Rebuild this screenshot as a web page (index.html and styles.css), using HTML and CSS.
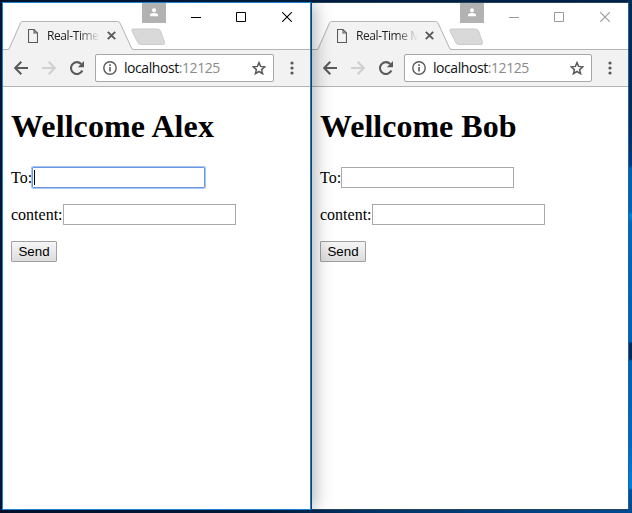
FILE: index.html
```
<!DOCTYPE html>
<html lang="en">
<head>
<meta charset="utf-8">
<title>Real-Time Messages</title>
<link rel="stylesheet" href="styles.css">
</head>
<body>
<svg width="0" height="0" class="defs">
  <symbol id="file" viewBox="0 0 10 14"><path d="M.5.5H6L9.500 4v9.500H.5zM6 .5V4h3.500" fill="none" stroke="#5a5a5a" stroke-width="1.100"/></symbol>
  <symbol id="tabclose" viewBox="0 0 9 9"><path d="M.8.8l7.400 7.400M8.200.8L.8 8.200" stroke="#5a5a5a" stroke-width="1.900"/></symbol>
  <symbol id="newtab" viewBox="0 0 36 18"><path d="M3 1h24.500q2 0 3 2l4 11q.7 2.500-1.500 2.500H11q-2.500 0-3.500-2.500L2 3Q1.400 1 3 1z" fill="#d9d9d9" stroke="#cbcbcb"/></symbol>
  <symbol id="user" viewBox="0 0 10 9"><circle cx="5" cy="2.200" r="2" fill="#fff"/><path d="M1 8.200V7q0-2 4-2t4 2v1.200z" fill="#fff"/></symbol>
  <symbol id="back" viewBox="0 0 14 14"><path d="M14 7H1.500M7.300.8L1.200 7l6.100 6.200" fill="none" stroke="currentColor" stroke-width="2"/></symbol>
  <symbol id="reload" viewBox="0 0 14 14"><path d="M12.300 9.500A5.900 5.900 0 1 1 11.200 3" fill="none" stroke="#5a5a5a" stroke-width="2.100"/><path d="M14 0v6.200H7.800z" fill="#5a5a5a"/></symbol>
  <symbol id="info" viewBox="0 0 14 14"><circle cx="7" cy="7" r="6.200" fill="none" stroke="#5a5a5a" stroke-width="1.400"/><path d="M7 6v4.500M7 3.300v1.600" stroke="#5a5a5a" stroke-width="1.600"/></symbol>
  <symbol id="star" viewBox="0 0 14 14"><path d="M7 1.600l1.600 3.800 4.200.4-3.200 2.800 1 4.100L7 10.500l-3.600 2.200 1-4.100-3.200-2.800 4.200-.4z" fill="none" stroke="#5a5a5a" stroke-width="1.500"/></symbol>
  <symbol id="dots" viewBox="0 0 4 14"><circle cx="2" cy="2" r="1.600"/><circle cx="2" cy="7" r="1.600"/><circle cx="2" cy="12" r="1.600"/></symbol>
  <symbol id="wmin" viewBox="0 0 10 10"><path d="M0 5.500h10" stroke="currentColor"/></symbol>
  <symbol id="wmax" viewBox="0 0 10 10"><path d="M.5.5h9v9h-9z" fill="none" stroke="currentColor"/></symbol>
  <symbol id="wclose" viewBox="0 0 10 10"><path d="M.2.2l9.600 9.600M9.800.2L.2 9.800" stroke="currentColor" stroke-width="1.100"/></symbol>
</svg>
<main class="desktop">
  <section class="window active">
    <header class="strip">
      <div class="tabs">
        <div class="tab">
          <svg class="shape" width="126" height="29" viewBox="0 0 126 29"><path d="M0 28.500L12.500 2Q13.200.5 15 .5H109.500Q111.300.5 112 2L124.500 28.500V29H0z" fill="#f2f2f2"/><path d="M0 28.500Q1 28.500 1.500 27L12.500 2Q13.200.5 15 .5H109.500Q111.300.5 112 2L123.500 27Q124 28.500 126 28.500" fill="none" stroke="#b4b4b4"/></svg>
          <svg class="file"><use href="#file"/></svg>
          <span class="title">Real-Time Messages</span>
          <svg class="tabclose"><use href="#tabclose"/></svg>
        </div>
        <svg class="newtab"><use href="#newtab"/></svg>
      </div>
      <div class="controls">
        <span class="badge"><svg width="10" height="9"><use href="#user"/></svg></span>
        <svg class="ctl"><use href="#wmin"/></svg>
        <svg class="ctl"><use href="#wmax"/></svg>
        <svg class="ctl"><use href="#wclose"/></svg>
      </div>
    </header>
    <nav class="toolbar">
      <svg class="icon"><use href="#back"/></svg>
      <svg class="icon forward"><use href="#back"/></svg>
      <svg class="icon"><use href="#reload"/></svg>
      <div class="address">
        <svg class="icon"><use href="#info"/></svg>
        <span class="url">localhost<span class="port">:12125</span></span>
        <svg class="icon"><use href="#star"/></svg>
      </div>
      <svg class="dots"><use href="#dots"/></svg>
    </nav>
    <article class="page">
      <h1>Wellcome Alex</h1>
      <div class="field"><label>To:</label><div class="input focused"><i class="caret"></i></div></div>
      <div class="field"><label>content:</label><div class="input"></div></div>
      <button class="send">Send</button>
    </article>
  </section>
  <section class="window inactive">
    <header class="strip">
      <div class="tabs">
        <div class="tab">
          <svg class="shape" width="135" height="29" viewBox="0 0 135 29"><path d="M0 28.500L12.500 2Q13.200.5 15 .5H118.500Q120.300.5 121 2L133.500 28.500V29H0z" fill="#f2f2f2"/><path d="M0 28.500Q1 28.500 1.500 27L12.500 2Q13.200.5 15 .5H118.500Q120.300.5 121 2L132.500 27Q133 28.500 135 28.500" fill="none" stroke="#b4b4b4"/></svg>
          <svg class="file"><use href="#file"/></svg>
          <span class="title">Real-Time Messages</span>
          <svg class="tabclose"><use href="#tabclose"/></svg>
        </div>
        <svg class="newtab"><use href="#newtab"/></svg>
      </div>
      <div class="controls">
        <span class="badge"><svg width="10" height="9"><use href="#user"/></svg></span>
        <svg class="ctl"><use href="#wmin"/></svg>
        <svg class="ctl"><use href="#wmax"/></svg>
        <svg class="ctl"><use href="#wclose"/></svg>
      </div>
    </header>
    <nav class="toolbar">
      <svg class="icon"><use href="#back"/></svg>
      <svg class="icon forward"><use href="#back"/></svg>
      <svg class="icon"><use href="#reload"/></svg>
      <div class="address">
        <svg class="icon"><use href="#info"/></svg>
        <span class="url">localhost<span class="port">:12125</span></span>
        <svg class="icon"><use href="#star"/></svg>
      </div>
      <svg class="dots"><use href="#dots"/></svg>
    </nav>
    <article class="page">
      <h1>Wellcome Bob</h1>
      <div class="field"><label>To:</label><div class="input"></div></div>
      <div class="field"><label>content:</label><div class="input"></div></div>
      <button class="send">Send</button>
    </article>
  </section>
</main>
</body>
</html>
```
FILE: styles.css
```
* { box-sizing: border-box; }
html, body { margin: 0; height: 100%; overflow: hidden; }
svg { display: block; flex: none; }
.defs { position: absolute; }

.desktop {
  display: flex;
  width: 632px;
  height: 513px;
  padding: 2px 3px 3px 2px;
  background:
    linear-gradient(#002b55, #002b55 105px, #003b78 165px, #0060b0 169px, #0062b8 212px, #0086d8 215px, #0068bd 222px, #0062b8 342px, #002c5c 343px, #002c5c 359px, #0061b5 361px, #0067c0 440px, #0080dd 488px, #004e99 490px, #004a91) right / 4px 100% no-repeat,
    linear-gradient(90deg, #00102a, #001a3a 40%, #003466 60%, #004a91) bottom / 100% 3px no-repeat,
    linear-gradient(90deg, #00142c, #00224a) top / 100% 2px no-repeat,
    #001631;
}

.window {
  display: flex;
  flex-direction: column;
  height: 508px;
  background: #fff;
  border: 1px solid #1883d7;
}
.active { width: 309px; z-index: 1; box-shadow: 1px 0 0 #1e3c5c, 2px 0 18px rgba(0,0,0,.36); clip-path: inset(0 -22px 0 0); }
.inactive { width: 318px; border-color: #234463; border-right-color: #23639d; }

.strip {
  display: grid;
  flex: none;
  height: 47px;
  border-bottom: 1px solid #b4b4b4;
}
.tabs, .controls { grid-area: 1 / 1; display: flex; }
.tabs { align-items: flex-end; padding-left: 5px; }
.tab {
  position: relative;
  display: flex;
  align-items: center;
  width: 126px;
  height: 29px;
  margin-bottom: -1px;
  padding: 0 18px 0 20px;
}
.inactive .tab { width: 135px; }
.shape { position: absolute; inset: 0; }
.file { position: relative; width: 10px; height: 14px; }
.title {
  position: relative;
  flex: 1;
  margin: 0 7px 0 9px;
  overflow: hidden;
  white-space: nowrap;
  font: 12px/18px "Open Sans", "Noto Sans", sans-serif;
  letter-spacing: -.4px;
  color: #222;
  mask-image: linear-gradient(90deg, #000 calc(100% - 22px), transparent);
}
.tabclose { position: relative; width: 9px; height: 9px; }
.newtab { width: 36px; height: 18px; margin: 0 0 3px -4px; }

.controls { justify-content: flex-end; color: #000; }
.inactive .controls { color: #999; }
.badge {
  display: flex;
  justify-content: center;
  width: 24px;
  height: 20px;
  padding-top: 5px;
  margin-right: 25px;
  background: #b2b2b2;
}
.ctl { width: 10px; height: 10px; margin-top: 9px; margin-right: 35px; }
.ctl:nth-child(3) { margin-right: 36px; }
.ctl:last-child { margin-right: 18px; }
.ctl { position: relative; }

.toolbar {
  display: flex;
  flex: none;
  align-items: center;
  height: 37px;
  padding: 0 16px 0 11px;
  background: #f2f2f2;
  border-bottom: 1px solid #b4b4b4;
}
.icon { width: 14px; height: 14px; color: #5a5a5a; }
.toolbar > .icon { margin-right: 14px; }
.toolbar > .icon:nth-child(3) { margin-right: 11px; }
.toolbar > .forward { transform: scaleX(-1); color: #d0d0d0; }
.address {
  display: flex;
  align-items: center;
  flex: 1;
  height: 28px;
  padding: 0 7px;
  background: #fff;
  border: 1px solid #a8a8a8;
  border-radius: 2px;
}
.url {
  flex: 1;
  margin-left: 7px;
  font: 14px/20px "Open Sans", "Noto Sans", sans-serif;
  letter-spacing: -.43px;
  color: #111;
}
.port { color: #8a8a8a; }
.dots { width: 4px; height: 14px; margin-left: 16px; fill: #5a5a5a; }

.page {
  padding: 21px 8px;
  font: 16px "Liberation Serif", "Times New Roman", serif;
  color: #000;
}
.page h1 { margin: 0 0 22px; font-size: 32px; line-height: 37px; font-weight: bold; }
.active h1 { letter-spacing: .1px; }
.field { display: flex; height: 21px; margin-bottom: 16px; line-height: 21px; }
.input { width: 173px; height: 21px; border: 1px solid #a9a9a9; }
.focused { padding: 2px 1px; border-color: #6b97e0; box-shadow: 0 0 0 1px #a7c5f5; border-radius: 1px; }
.caret { display: block; width: 1px; height: 15px; background: #000; }
.send {
  display: block;
  width: 46px;
  height: 21px;
  padding: 0;
  font: 13.333px/17px "Liberation Sans", Arial, sans-serif;
  color: #000;
  background: linear-gradient(#f6f6f6, #dcdcdc);
  border: 1px solid #a0a0a0;
  border-radius: 1px;
}
```
